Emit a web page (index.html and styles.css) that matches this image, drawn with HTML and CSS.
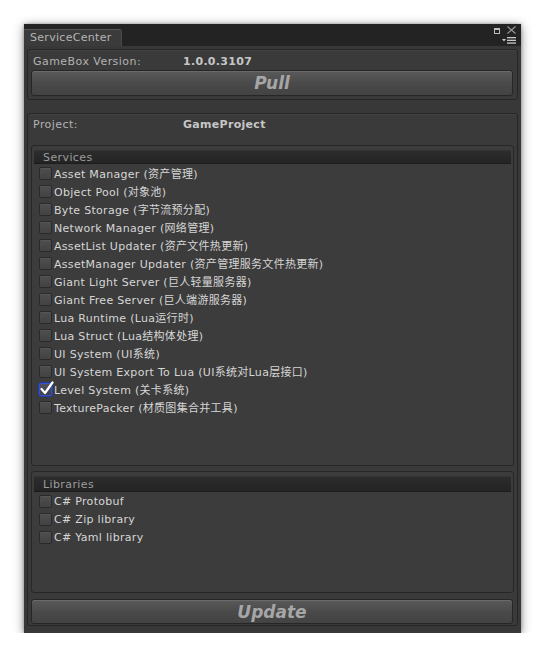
FILE: index.html
```html
<!DOCTYPE html>
<html>
<head>
<meta charset="utf-8">
<link rel="stylesheet" href="styles.css">
</head>
<body>
<div class="window">
  <div class="titlebar">
    <div class="tab">ServiceCenter</div>
    <div class="controls">
      <div class="ctl-top">
        <svg width="6" height="6" viewBox="0 0 6 6"><rect x="0.5" y="0.5" width="5" height="5" fill="none" stroke="#bdbdbd" stroke-width="1"/><rect x="0" y="0" width="6" height="2" fill="#bdbdbd"/></svg>
        <svg width="9" height="8" viewBox="0 0 9 8"><path d="M0.5 0.5 L8.5 7.5 M8.5 0.5 L0.5 7.5" stroke="#9a9a9a" stroke-width="1.1" fill="none"/></svg>
      </div>
      <div class="ctl-bot">
        <svg width="14" height="7" viewBox="0 0 14 7"><path d="M0 2 L4 2 L2 4.5 Z" fill="#c8c8c8"/><rect x="5" y="0" width="9" height="1.3" fill="#c8c8c8"/><rect x="5" y="2.7" width="9" height="1.3" fill="#c8c8c8"/><rect x="5" y="5.4" width="9" height="1.3" fill="#c8c8c8"/></svg>
      </div>
    </div>
  </div>
  <div class="content">
    <div class="box version-box">
      <div class="row">
        <span class="label">GameBox Version:</span>
        <span class="value">1.0.0.3107</span>
      </div>
      <div class="btn pull">Pull</div>
    </div>
    <div class="box project-box">
      <div class="row">
        <span class="label">Project:</span>
        <span class="value">GameProject</span>
      </div>
      <div class="group services">
        <div class="group-head">Services</div>
        <ul class="list">
          <li><span class="cb"></span>Asset Manager (资产管理)</li>
          <li><span class="cb"></span>Object Pool (对象池)</li>
          <li><span class="cb"></span>Byte Storage (字节流预分配)</li>
          <li><span class="cb"></span>Network Manager (网络管理)</li>
          <li><span class="cb"></span>AssetList Updater (资产文件热更新)</li>
          <li><span class="cb"></span>AssetManager Updater (资产管理服务文件热更新)</li>
          <li><span class="cb"></span>Giant Light Server (巨人轻量服务器)</li>
          <li><span class="cb"></span>Giant Free Server (巨人端游服务器)</li>
          <li><span class="cb"></span>Lua Runtime (Lua运行时)</li>
          <li><span class="cb"></span>Lua Struct (Lua结构体处理)</li>
          <li><span class="cb"></span>UI System (UI系统)</li>
          <li><span class="cb"></span>UI System Export To Lua (UI系统对Lua层接口)</li>
          <li><span class="cb checked"><svg width="15" height="15" viewBox="0 0 15 15"><path d="M2.5 8 L6 12 L13.5 1.5" stroke="#ffffff" stroke-width="2.2" fill="none" stroke-linecap="round" stroke-linejoin="round"/></svg></span>Level System (关卡系统)</li>
          <li><span class="cb"></span>TexturePacker (材质图集合并工具)</li>
        </ul>
      </div>
      <div class="group libraries">
        <div class="group-head">Libraries</div>
        <ul class="list">
          <li><span class="cb"></span>C# Protobuf</li>
          <li><span class="cb"></span>C# Zip library</li>
          <li><span class="cb"></span>C# Yaml library</li>
        </ul>
      </div>
      <div class="btn update">Update</div>
    </div>
  </div>
</div>
</body>
</html>
```

FILE: styles.css
```css
* { box-sizing: border-box; }
html, body { margin: 0; padding: 0; background: #ffffff; }
body {
  padding: 24px 0 0 24px;
  font-family: "DejaVu Sans", "Noto Sans CJK SC", sans-serif;
  font-size: 11px;
}
.window {
  width: 497px;
  height: 609px;
  background: #383838;
  box-shadow: 0 2px 10px rgba(0,0,0,0.45), 0 0 3px rgba(0,0,0,0.3);
  display: flex;
  flex-direction: column;
}
.titlebar {
  height: 22px;
  background: #232323;
  display: flex;
  align-items: flex-end;
  justify-content: space-between;
}
.tab {
  width: 98px;
  height: 17px;
  background: #3b3b3b;
  border-top: 1px solid #555555;
  border-right: 1px solid #4a4a4a;
  border-top-right-radius: 3px;
  color: #b4b4b4;
  padding-left: 6px;
  line-height: 16px;
  letter-spacing: 0.3px;
}
.controls {
  height: 22px;
  display: flex;
  flex-direction: column;
  align-items: flex-end;
  padding: 2px 5px 0 0;
  gap: 3px;
}
.ctl-top { display: flex; align-items: center; gap: 7px; }
.ctl-top svg:first-child { margin-top: 1px; }
.ctl-bot { display: flex; }
.content {
  flex: 1;
  padding: 3px 3px 8px 3px;
  display: flex;
  flex-direction: column;
}
.box {
  width: 491px;
  background: #3a3a3a;
  border: 1px solid #262626;
  border-radius: 3px;
  box-shadow: inset 0 1px 0 #414141;
}
.version-box {
  height: 51px;
  padding: 2px 4px 0 3px;
}
.row {
  height: 18px;
  display: flex;
  align-items: center;
  padding-left: 2px;
  letter-spacing: 0.45px;
}
.label { width: 150px; color: #b2b2b2; }
.value { color: #c6c6c6; font-weight: bold; letter-spacing: 0.3px; }
.btn {
  height: 26px;
  border: 1px solid #262626;
  border-radius: 3px;
  background: linear-gradient(#5a5a5a, #4a4a4a 50%, #434343);
  box-shadow: inset 0 1px 0 #6a6a6a;
  display: flex;
  align-items: center;
  justify-content: center;
  font-weight: bold;
  font-style: italic;
  font-size: 17px;
  color: #a6a6a6;
}
.project-box {
  margin-top: 13px;
  height: 513px;
  padding: 1px 4px 0 3px;
  display: flex;
  flex-direction: column;
}
.project-box .row { margin-bottom: 12px; }
.group {
  width: 483px;
  background: #3c3c3c;
  border: 1px solid #272727;
  border-radius: 3px;
  padding: 4px 2px 0 2px;
}
.services { height: 321px; }
.libraries { height: 122px; margin-top: 5px; }
.group-head {
  height: 14px;
  background: linear-gradient(#2c2c2c, #242424);
  border-bottom: 1px solid #1c1c1c;
  border-top: 1px solid #333333;
  color: #9c9c9c;
  padding-left: 9px;
  line-height: 13px;
  letter-spacing: 0.4px;
}
.libraries .group-head { height: 16px; line-height: 15px; }
.list {
  list-style: none;
  margin: 0;
  padding: 0 0 0 5px;
}
.list li {
  height: 18px;
  display: flex;
  align-items: center;
  color: #d6d6d6;
  white-space: nowrap;
  letter-spacing: 0.3px;
}
.cb {
  width: 13px;
  height: 13px;
  margin-right: 2px;
  border: 1px solid #2a2a2a;
  border-radius: 2px;
  background: linear-gradient(#4e4e4e, #434343);
  box-shadow: inset 0 1px 0 #565656;
  position: relative;
  flex: none;
}
.cb.checked {
  border: 1px solid #3050d8;
  box-shadow: 0 0 0 1px #2a3c8c;
  background: linear-gradient(#505060, #40404a);
}
.cb.checked svg {
  position: absolute;
  left: -1px;
  top: -3px;
}
.update {
  margin-top: 6px;
  height: 25px;
  width: 482px;
}
```
